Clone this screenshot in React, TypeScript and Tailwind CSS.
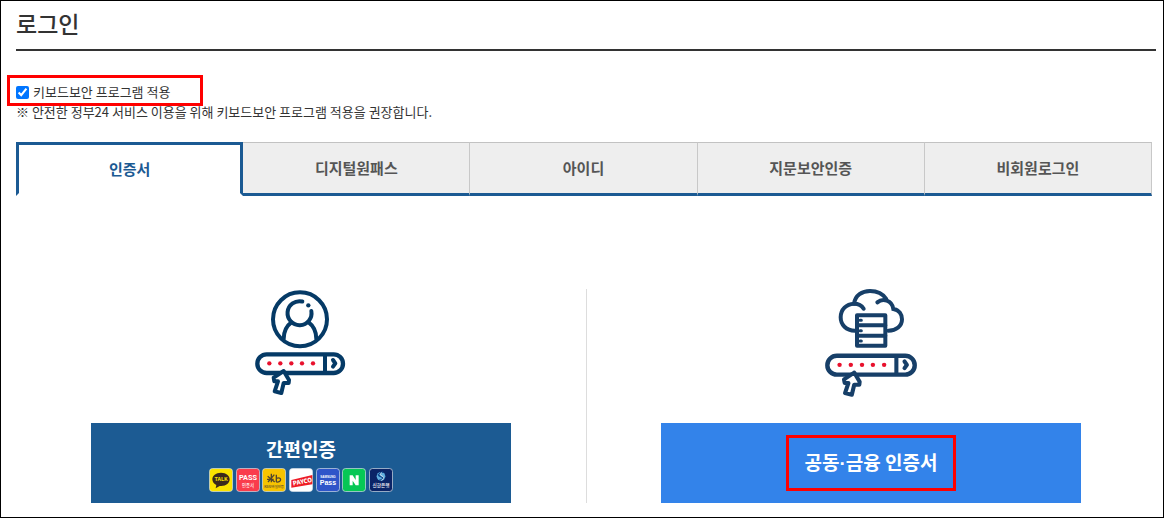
import React, { useState } from "react";

const tabs = ["인증서", "디지털원패스", "아이디", "지문보안인증", "비회원로그인"];

function PasswordBar({ tone }: { tone: string }) {
  return (
    <g>
      <rect x="52" y="223" width="257" height="56" rx="28" fill="#fff" stroke={tone} strokeWidth="13" />
      <path d="M255 223V279" stroke={tone} strokeWidth="12" />
      {[88, 121, 154, 186, 219].map((x) => (
        <circle key={x} cx={x} cy="250" r="6.5" fill="#e8112d" />
      ))}
      <path d="M279 240L286 250L279 260" fill="none" stroke={tone} strokeWidth="12" strokeLinecap="round" strokeLinejoin="round" />
      <path
        d="M131 273L101 293L103 304L114 304L104 334L124 339L131 309L146 309L147 300Z"
        fill="#fff"
        stroke={tone}
        strokeWidth="12"
        strokeLinejoin="round"
      />
    </g>
  );
}

function PersonIcon() {
  return (
    <svg viewBox="0 0 360 375" className="h-[125px] w-[120px]" aria-hidden="true">
      <g fill="none" stroke="#053a66" strokeWidth="12" strokeLinecap="round">
        <circle cx="180" cy="118" r="81" />
        <path d="M187 64.500A36 36 0 1 0 214 93" />
        <path d="M131 177C131 153 139 138 154 127" />
        <path d="M206 127C221 138 229 153 229 177" />
      </g>
      <circle cx="205" cy="76" r="6.500" fill="#053a66" />
      <PasswordBar tone="#053a66" />
    </svg>
  );
}

function CloudServerIcon() {
  return (
    <svg viewBox="0 0 360 375" className="h-[125px] w-[120px]" aria-hidden="true">
      <g fill="none" stroke="#173f68" strokeWidth="12" strokeLinecap="round">
        <path d="M135 152C108 152 92 134 92 112C92 88 109 72 132 71C136 46 156 33 180 33C202 33 219 42 229 57" />
        <path d="M132 71C144 71 155 76 161 86" />
        <path d="M202 67C218 54 246 60 250 87C268 90 276 104 276 118C276 138 259 152 235 152" />
        <rect x="141" y="106" width="85" height="91" strokeLinejoin="round" />
        <path d="M141 136H226M141 167H226" />
        <path d="M150 121H154M150 152H154M150 183H154" strokeWidth="9" />
      </g>
      <g transform="translate(-1 2) scale(1.02 1.01)">
        <PasswordBar tone="#173f68" />
      </g>
    </svg>
  );
}

function Badge({ label, fill, children }: { label: string; fill: string; children: React.ReactNode }) {
  return (
    <svg viewBox="0 0 72 72" className="size-6" role="img" aria-label={label} fontFamily="'Noto Sans CJK KR', sans-serif" textAnchor="middle">
      <rect x="1.5" y="1.5" width="69" height="69" rx="9" fill={fill} stroke="#d9e2ea" strokeWidth="2" />
      {children}
    </svg>
  );
}

function ProviderBadges() {
  return (
    <span className="flex w-[184px] justify-between">
      <Badge label="카카오톡" fill="#fbe300">
        <path d="M36 14C20 14 10 23 10 34C10 42 15 48 22 51L20 61L32 54C50 56 62 46 62 34C62 23 52 14 36 14Z" fill="#3b2a1c" />
        <text x="36" y="40" fontSize="16" fontWeight="700" fill="#fbe300">TALK</text>
      </Badge>
      <Badge label="PASS" fill="#fa3c4c">
        <text x="36" y="36" fontSize="22" fontWeight="700" fontFamily="Roboto, sans-serif" fill="#fff">PASS</text>
        <text x="36" y="56" fontSize="13" fontWeight="500" fill="#fff">인증서</text>
      </Badge>
      <Badge label="KB" fill="#f8c400">
        <path d="M17 25L38 42M37 20L18 42M28 17V43M15 34H35M43 20V42M43 42C60 44 60 25 43 31" fill="none" stroke="#51462f" strokeWidth="4" />
        <text x="36" y="59" fontSize="10" fontWeight="500" fill="#51462f">KB모바일인증</text>
      </Badge>
      <Badge label="PAYCO" fill="#fff">
        <path d="M7 36L70 21V49L7 59Z" fill="#ee1c25" />
        <text x="41" y="47" fontSize="18" fontWeight="900" fill="#fff" transform="rotate(-11 41 45)">PAYCO</text>
      </Badge>
      <Badge label="Samsung Pass" fill="#2f55c9">
        <text x="36" y="29" fontSize="9" fontWeight="700" fontFamily="'Liberation Sans', sans-serif" fill="#fff">SAMSUNG</text>
        <text x="36" y="51" fontSize="21" fontWeight="700" fontFamily="'Liberation Sans', sans-serif" fill="#fff">Pass</text>
      </Badge>
      <Badge label="네이버" fill="#06c755">
        <path d="M23 52V22H32L41 36V22H50V52H41L32 38V52Z" fill="#fff" />
      </Badge>
      <Badge label="신한은행" fill="#0b2467">
        <circle cx="36" cy="25" r="13" fill="#60aede" />
        <path d="M42 12C23 17 32 25 38 27C46 31 38 35 30 37M28 18C27 29 47 25 44 33" fill="none" stroke="#0d4a91" strokeWidth="4" />
        <path d="M39 14C31 18 32 21 39 24S45 33 37 37" fill="none" stroke="#fff" strokeWidth="2.500" />
        <text x="36" y="58" fontSize="14" fontWeight="500" fill="#fff">신한은행</text>
      </Badge>
    </span>
  );
}

export default function App() {
  const [active, setActive] = useState(0);
  const [secure, setSecure] = useState(true);

  return (
    <main className="min-h-screen border border-black bg-white pr-[7px] pl-[15px] font-['Noto_Sans_CJK_KR',sans-serif] text-[#333]">
      <h1 className="border-b-2 border-[#333] pt-[3px] pb-[7px] text-[23px] leading-[38px] font-medium text-[#333]">로그인</h1>

      <section className="pt-[31px] text-[13px] leading-5 text-[#333]">
        <div className="relative flex">
          <label className="flex items-center gap-1">
            <input
              type="checkbox"
              checked={secure}
              onChange={(e) => setSecure(e.target.checked)}
              className="size-[13px]"
            />
            키보드보안 프로그램 적용
          </label>
          <span className="pointer-events-none absolute -top-[7px] -left-[9px] h-[31px] w-[196px] border-3 border-[#f00]" />
        </div>
        <p>※ 안전한 정부24 서비스 이용을 위해 키보드보안 프로그램 적용을 권장합니다.</p>
      </section>

      <div role="tablist" className="mt-5 mr-1 grid grid-cols-5">
        {tabs.map((tab, i) => (
          <button
            key={tab}
            type="button"
            role="tab"
            aria-selected={i === active}
            onClick={() => setActive(i)}
            className={
              i === active
                ? "h-[54px] border-3 border-[#1b5a93] border-b-white bg-white text-[15px] font-bold text-[#1b5a93]"
                : "h-[54px] border-t border-r border-b-3 border-t-[#c2c2c2] border-r-[#c8c8c8] border-b-[#1b5a93] bg-[#eee] text-[15px] font-bold text-[#555]"
            }
          >
            {tab}
          </button>
        ))}
      </div>

      <div role="tabpanel" className="mt-[93px] grid grid-cols-2 pb-[14px]">
        <div className="flex flex-col items-center">
          <div className="-mt-[9px] mb-[18px] pr-0.5">
            <PersonIcon />
          </div>
          <button type="button" className="flex h-20 w-full max-w-[420px] flex-col items-center justify-center gap-[5px] bg-[#1c5b93] text-white">
            <span className="text-[19px] leading-7 font-bold">간편인증</span>
            <ProviderBadges />
          </button>
        </div>
        <div className="flex flex-col items-center border-l border-[#ddd] pr-px">
          <div className="-mt-[9px] mb-[18px] pr-0.5">
            <CloudServerIcon />
          </div>
          <button type="button" className="flex h-20 w-full max-w-[420px] items-center justify-center bg-[#3383ea] text-white">
            <span className="relative text-[19px] leading-7 font-bold">
              공동<span className="font-['Liberation_Sans']">·</span>금융 인증서
              <span className="pointer-events-none absolute -inset-x-[18px] -inset-y-[13px] border-3 border-[#f00]" />
            </span>
          </button>
        </div>
      </div>
    </main>
  );
}
